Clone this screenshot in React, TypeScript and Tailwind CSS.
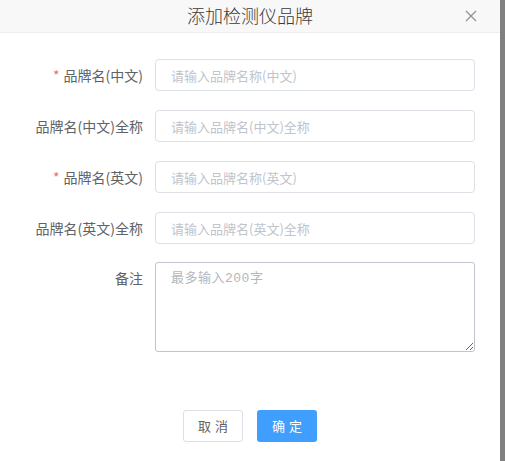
import React from 'react';

const font = { fontFamily: '"Noto Sans CJK SC", "Noto Sans", sans-serif' };

const fields = [
    { label: '品牌名(中文)', placeholder: '请输入品牌名称(中文)', required: true },
    { label: '品牌名(中文)全称', placeholder: '请输入品牌名(中文)全称', required: false },
    { label: '品牌名(英文)', placeholder: '请输入品牌名称(英文)', required: true },
    { label: '品牌名(英文)全称', placeholder: '请输入品牌名(英文)全称', required: false },
];

export default function App() {
    return (
        <div className="w-[505px] h-[461px] flex overflow-hidden font-['Noto_Sans_CJK_SC',sans-serif]">
            <div className="w-[500px] h-full bg-white flex flex-col">
                {/* Header */}
                <div className="relative h-[33px] shrink-0 bg-[#f8f8f8] border-b border-[#eeeeee] flex items-center justify-center">
                    <span className="text-[18px] leading-none text-[#3a3a3a] font-light -mt-[3px]">添加检测仪品牌</span>
                    <button className="absolute right-[22px] top-[9px] text-[#909399]">
                        <svg width="14" height="14" viewBox="0 0 14 14" fill="none" stroke="currentColor" strokeWidth="1.3">
                            <path d="M2 2L12 12M12 2L2 12" />
                        </svg>
                    </button>
                </div>

                {/* Form */}
                <div className="pt-[26px] pr-[25px]">
                    {fields.map((f, i) => (
                        <div key={f.label} className={i === fields.length - 1 ? 'flex mb-[18px]' : 'flex mb-[19px]'}>
                            <label className="w-[155px] pr-[12px] text-right text-[14px] leading-[32px] text-[#606266]">
                                {f.required && <span className="text-[#f56c6c] mr-[4px]">*</span>}
                                {f.label}
                            </label>
                            <input
                                className="w-[320px] h-[32px] border border-[#dcdfe6] rounded-[4px] px-[15px] text-[13px] text-[#606266] placeholder:text-[#c0c4cc] outline-none"
                                placeholder={f.placeholder}
                            />
                        </div>
                    ))}
                    <div className="flex">
                        <label className="w-[155px] pr-[12px] text-right text-[14px] leading-[32px] text-[#606266]">备注</label>
                        <textarea
                            className="w-[320px] h-[90px] border border-[#c0c4cc] rounded-[3px] px-[15px] py-[7px] text-[13px] leading-[18px] tracking-[0.5px] text-[#606266] placeholder:text-[#b4b7bd] outline-none font-['Liberation_Mono','Noto_Sans_CJK_SC',monospace]"
                            placeholder="最多输入200字"
                        />
                    </div>
                </div>

                {/* Footer */}
                <div className="flex justify-center gap-[14px] mt-[58px]" style={font}>
                    <button className="w-[60px] h-[32px] border border-[#dcdfe6] rounded-[3px] bg-white text-[13px] tracking-[4px] pl-[4px] text-[#606266]">
                        取消
                    </button>
                    <button className="w-[60px] h-[32px] rounded-[3px] bg-[#409eff] text-[13px] tracking-[4px] pl-[4px] text-white">
                        确定
                    </button>
                </div>
            </div>
            <div className="flex-1 h-full bg-[#808080]" />
        </div>
    );
}
